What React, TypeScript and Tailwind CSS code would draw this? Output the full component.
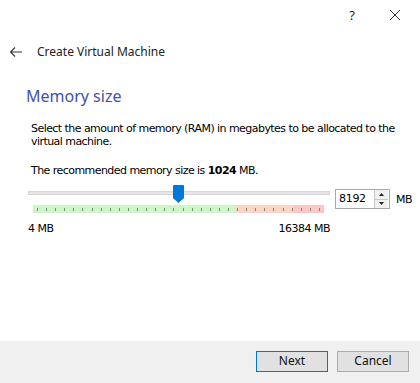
import React from 'react';

const ticks = Array.from({ length: 32 }, (_, i) => i);

export default function App() {
    return (
        <div className="w-[420px] h-[383px] bg-white flex flex-col overflow-hidden text-[#000]" style={{ fontFamily: '"Liberation Sans", sans-serif' }}>
            {/* title bar */}
            <div className="h-[30px] flex items-center justify-end pr-[19px] gap-[34px] text-[#222] font-['Noto_Sans',sans-serif]">
                <span className="text-[13px] leading-none">?</span>
                <svg width="12" height="12" viewBox="0 0 12 12" className="stroke-[#333]">
                    <path d="M1 1L11 11M11 1L1 11" strokeWidth="1" />
                </svg>
            </div>

            {/* header */}
            <div className="h-[44px] flex items-center pl-[9px] font-['Noto_Sans',sans-serif]">
                <svg width="14" height="12" viewBox="0 0 14 12" className="stroke-[#333] fill-none">
                    <path d="M13 6H1.5M6 1.5L1.5 6L6 10.5" strokeWidth="1.1" />
                </svg>
                <span className="ml-[14px] text-[12px] text-[#222]">Create Virtual Machine</span>
            </div>

            <div className="pl-[26px] pt-[10px] text-[16px] text-[#4153a8] font-['Noto_Sans',sans-serif] leading-[24px]">Memory size</div>

            <div className="pl-[31px] pr-[4px] pt-[14px] text-[11px] leading-[13px] font-['DejaVu_Sans',sans-serif] tracking-[-0.55px]">
                <p>Select the amount of memory (RAM) in megabytes to be allocated to the virtual machine.</p>
                <p className="mt-[16px]">The recommended memory size is <b>1024</b> MB.</p>
            </div>

            {/* slider */}
            <div className="flex pl-[28px] mt-[6px]">
                <div className="w-[302px] flex flex-col">
                    <div className="relative h-[20px]">
                        <div className="absolute left-0 right-0 top-[8px] h-[4px] bg-[#e6e6e6] border border-[#d6d6d6]" />
                        <svg className="absolute left-[145px] top-[2px]" width="11" height="18" viewBox="0 0 11 18">
                            <path d="M1 0H10A1 1 0 0 1 11 1V13L5.5 18L0 13V1A1 1 0 0 1 1 0Z" fill="#0078d7" />
                        </svg>
                    </div>
                    <div className="ml-[5px] w-[291px] h-[8px] mt-[2px] relative flex" >
                        <div className="w-[203px] bg-[#ccf5c8]" />
                        <div className="w-[57px] bg-[#fdd5c4]" />
                        <div className="flex-1 bg-[#ffc6c6]" />
                        <div className="absolute inset-0 flex justify-between px-[4px] items-center">
                            {ticks.map(i => (
                                <div key={i} className="w-px h-[3px] bg-[#7a8a7a]" />
                            ))}
                        </div>
                    </div>
                    <div className="flex justify-between mt-[8px] text-[11px] font-['DejaVu_Sans',sans-serif] tracking-[-0.5px]">
                        <span>4 MB</span>
                        <span>16384 MB</span>
                    </div>
                </div>
                <div className="ml-[5px] mt-[6px] flex items-start">
                    <div className="w-[55px] h-[20px] border border-[#a8a8a8] flex items-center">
                        <span className="flex-1 pl-[3px] text-[11px] font-['DejaVu_Sans',sans-serif] tracking-[-0.3px]">8192</span>
                        <div className="w-[14px] h-[18px] mr-px flex flex-col border-l border-[#c8c8c8]">
                            <div className="flex-1 flex items-center justify-center bg-[#f0f0f0] border-b border-[#c8c8c8]">
                                <svg width="5" height="3" viewBox="0 0 5 3"><path d="M0 3L2.5 0L5 3Z" fill="#222" /></svg>
                            </div>
                            <div className="flex-1 flex items-center justify-center bg-[#f0f0f0]">
                                <svg width="5" height="3" viewBox="0 0 5 3"><path d="M0 0L2.5 3L5 0Z" fill="#222" /></svg>
                            </div>
                        </div>
                    </div>
                    <span className="ml-[6px] mt-[3px] text-[11px] font-['DejaVu_Sans',sans-serif] tracking-[-0.5px]">MB</span>
                </div>
            </div>

            {/* footer */}
            <div className="mt-auto h-[42px] bg-[#f0f0f0] flex items-center justify-end gap-[9px] pr-[11px] pb-[2px] font-['Noto_Sans',sans-serif]">
                <button className="w-[72px] h-[21px] bg-[#e1e1e1] border border-[#0078d7] text-[12px] text-[#111] leading-none">Next</button>
                <button className="w-[72px] h-[21px] bg-[#e1e1e1] border border-[#adadad] text-[12px] text-[#111] leading-none">Cancel</button>
            </div>
        </div>
    );
}
